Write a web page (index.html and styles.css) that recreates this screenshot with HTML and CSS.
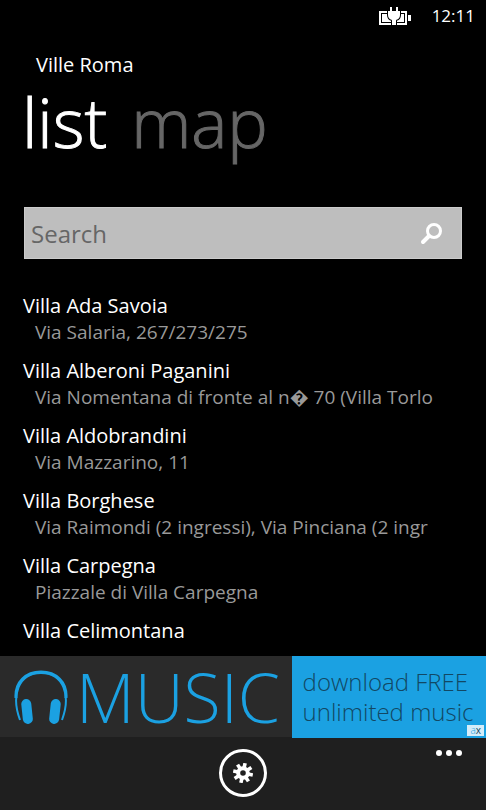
FILE: index.html
```html
<!DOCTYPE html>
<html lang="it">
<head>
<meta charset="utf-8">
<meta name="viewport" content="width=device-width, initial-scale=1">
<title>Ville Roma</title>
<link rel="stylesheet" href="styles.css">
</head>
<body>
<div class="status">
  <svg class="battery" width="34" height="22" viewBox="0 0 34 22" aria-hidden="true">
    <path d="M2 7h26v12H2z" fill="none" stroke="#fff" stroke-width="2"/>
    <path d="M4 9h22v8H4zM30 10h3v6h-3z" fill="#fff"/>
    <path d="M12 2h2v4h4V2h2v4h2v4q0 4-4 5v5h-4v-5q-4-1-4-5V6h2z" fill="#fff" stroke="#000" stroke-width="2" paint-order="stroke"/>
  </svg>
  <time>12:11</time>
</div>
<header>
  <h1>Ville Roma</h1>
  <nav class="pivot">
    <a class="active" href="#list">list</a>
    <a href="#map">map</a>
  </nav>
</header>
<form class="search" role="search">
  <input type="text" placeholder="Search" aria-label="Search">
  <button type="button" aria-label="Search">
    <svg width="24" height="24" viewBox="0 0 24 24" fill="none" stroke="#fff">
      <circle cx="14" cy="10" r="6.5" stroke-width="3"/>
      <path d="M9 15l-6 6" stroke-width="4" stroke-linecap="round"/>
    </svg>
  </button>
</form>
<main id="list">
  <ul>
    <li><h2>Villa Ada Savoia</h2><p>Via Salaria, 267/273/275</p></li>
    <li><h2>Villa Alberoni Paganini</h2><p>Via Nomentana di fronte al n� 70 (Villa Torlo</p></li>
    <li><h2>Villa Aldobrandini</h2><p>Via Mazzarino, 11</p></li>
    <li><h2>Villa Borghese</h2><p>Via Raimondi (2 ingressi), Via Pinciana (2 ingr</p></li>
    <li><h2>Villa Carpegna</h2><p>Piazzale di Villa Carpegna</p></li>
    <li><h2>Villa Celimontana</h2></li>
  </ul>
</main>
<a class="ad" href="#music">
  <span class="brand">
    <svg width="54" height="54" viewBox="0 0 54 54" aria-hidden="true">
      <path d="M6 50C-3 26 4 3 27 3s30 23 21 47" fill="none" stroke="#1ba1e2" stroke-width="2"/>
      <path d="M2 28C1 12 12 2 27 2s26 10 25 26" fill="none" stroke="#1ba1e2" stroke-width="3"/>
      <rect x="8" y="29" width="10" height="25" rx="5" fill="#1ba1e2" transform="rotate(-6 13 41)"/>
      <rect x="36" y="29" width="10" height="25" rx="5" fill="#1ba1e2" transform="rotate(6 41 41)"/>
    </svg>
    <span class="word">MUSIC</span>
  </span>
  <span class="offer">download FREE<br>unlimited music<span class="tag">a<b>x</b></span></span>
</a>
<footer>
  <button class="settings" type="button" aria-label="Settings">
    <svg width="20" height="20" viewBox="-10 -10 20 20">
      <g stroke="#fff" stroke-width="3.600">
        <path d="M0-10V-5M0 5V10M-10 0H-5M5 0H10" transform="rotate(12)"/>
        <path d="M0-10V-5M0 5V10M-10 0H-5M5 0H10" transform="rotate(57)"/>
      </g>
      <circle r="4.800" fill="none" stroke="#fff" stroke-width="4"/>
    </svg>
  </button>
  <button class="more" type="button" aria-label="More">
    <svg width="28" height="8" viewBox="0 0 28 8" fill="#fff"><circle cx="4" cy="4" r="3"/><circle cx="14" cy="4" r="3"/><circle cx="24" cy="4" r="3"/></svg>
  </button>
</footer>
</body>
</html>
```

FILE: styles.css
```css
* { box-sizing: border-box; margin: 0; padding: 0; }
body {
  height: 100vh;
  display: flex;
  flex-direction: column;
  overflow: hidden;
  background: #000;
  color: #fff;
  font-family: "Open Sans", "Noto Sans", sans-serif;
  font-size: 19px;
  line-height: 27px;
}
a { color: inherit; text-decoration: none; }
button { border: 0; background: none; display: flex; }
.status {
  height: 31px;
  padding: 0 11px;
  display: flex;
  justify-content: flex-end;
  align-items: center;
  gap: 20px;
  font-size: 17px;
}
header { padding: 20px 22px 0; }
h1 { padding-left: 14px; font-size: 20px; font-weight: 400; }
.pivot {
  display: flex;
  gap: 24px;
  height: 129px;
  font-size: 68px;
  font-weight: 300;
  line-height: 88px;
  color: #666;
  -webkit-text-stroke: 1px currentColor;
}
.pivot .active { color: #fff; }
.search {
  display: flex;
  align-items: center;
  height: 52px;
  margin: 0 24px;
  padding-right: 17px;
  background: #bebebe;
  border: 1px solid #ccc;
}
.search input {
  flex: 1;
  min-width: 0;
  height: 100%;
  padding: 0 6px;
  border: 0;
  outline: 0;
  background: none;
  color: #000;
  font: inherit;
  font-size: 24px;
}
.search input::placeholder { color: #666; opacity: 1; }
#list { flex: 1; min-height: 0; overflow: hidden; padding: 33px 48px 0 23px; }
ul { list-style: none; }
li { padding-bottom: 11px; }
h2 { font-size: 20px; font-weight: 400; }
li p { padding-left: 12px; color: #999; white-space: nowrap; overflow: hidden; }
.ad {
  display: grid;
  grid-template-columns: 3fr 2fr;
  height: 81px;
  color: #1ba1e2;
  background: #2a2a2a;
  font-weight: 300;
}
.brand { display: flex; align-items: center; gap: 8px; min-width: 0; padding-left: 14px; }
.word { font-size: 68px; line-height: 80px; }
.offer {
  position: relative;
  min-width: 0;
  padding: 11px;
  background: #1ba1e2;
  color: #124864;
  font-size: 24px;
  line-height: 30px;
  white-space: nowrap;
}
.tag {
  position: absolute;
  right: 2px;
  bottom: 2px;
  padding: 0 3px;
  background: #d5edf9;
  color: #1ba1e2;
  font-size: 10px;
  line-height: 11px;
}
.tag b { color: #124864; }
footer {
  display: grid;
  grid-template-columns: 1fr auto 1fr;
  height: 73px;
  padding: 12px 23px;
  background: #1f1f1f;
}
.settings {
  grid-column: 2;
  width: 48px;
  height: 48px;
  border: 3px solid #fff;
  border-radius: 50%;
  align-items: center;
  justify-content: center;
}
.more { justify-self: end; align-self: start; }
```
